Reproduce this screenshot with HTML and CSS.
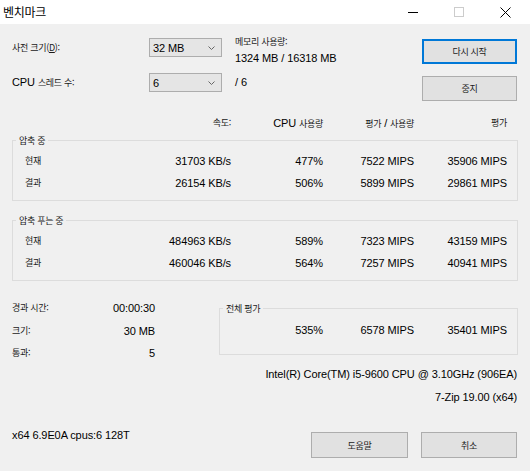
FILE: index.html
```html
<!DOCTYPE html>
<html lang="ko">
<head>
<meta charset="utf-8">
<title>벤치마크</title>
<link rel="stylesheet" href="styles.css">
</head>
<body>
<div class="titlebar">
  <span class="title">벤치마크</span>
  <div class="caption">
    <span class="cbtn"><svg width="10" height="10" viewBox="0 0 10 10"><path d="M0 5.5H10" stroke="#000" stroke-width="1"/></svg></span>
    <span class="cbtn"><svg width="10" height="10" viewBox="0 0 10 10"><rect x="0.5" y="0.5" width="9" height="9" fill="none" stroke="#cccccc" stroke-width="1"/></svg></span>
    <span class="cbtn"><svg width="11" height="11" viewBox="0 0 11 11"><path d="M0.5 0.5L10.5 10.5M10.5 0.5L0.5 10.5" stroke="#000" stroke-width="1"/></svg></span>
  </div>
</div>
<div class="content">
  <div class="top">
    <div class="lbl ko">사전 크기(<u>D</u>):</div>
    <div class="combo"><span>32 MB</span><svg width="7" height="4" viewBox="0 0 7 4"><path d="M0.5 0.5L3.5 3.5L6.5 0.5" fill="none" stroke="#666" stroke-width="1"/></svg></div>
    <div class="mem"><div class="ko">메모리 사용량:</div><div>1324 MB / 16318 MB</div></div>
    <button class="btn default btn-r1"><span class="ko">다시 시작</span></button>
    <div class="lbl">CPU <span class="ko">스레드 수:</span></div>
    <div class="combo"><span>6</span><svg width="7" height="4" viewBox="0 0 7 4"><path d="M0.5 0.5L3.5 3.5L6.5 0.5" fill="none" stroke="#666" stroke-width="1"/></svg></div>
    <div class="threads">/ 6</div>
    <button class="btn btn-r2"><span class="ko">중지</span></button>
  </div>

  <div class="cols header">
    <span></span>
    <span class="r ko">속도:</span>
    <span class="r">CPU <span class="ko">사용량</span></span>
    <span class="r"><span class="ko">평가</span> / <span class="ko">사용량</span></span>
    <span class="r ko">평가</span>
  </div>

  <div class="group">
    <span class="legend ko">압축 중</span>
    <div class="cols inner">
      <span class="ko">현재</span><span class="r">31703 KB/s</span><span class="r">477%</span><span class="r">7522 MIPS</span><span class="r">35906 MIPS</span>
      <span class="ko">결과</span><span class="r">26154 KB/s</span><span class="r">506%</span><span class="r">5899 MIPS</span><span class="r">29861 MIPS</span>
    </div>
  </div>

  <div class="group g2">
    <span class="legend ko">압축 푸는 중</span>
    <div class="cols inner">
      <span class="ko">현재</span><span class="r">484963 KB/s</span><span class="r">589%</span><span class="r">7323 MIPS</span><span class="r">43159 MIPS</span>
      <span class="ko">결과</span><span class="r">460046 KB/s</span><span class="r">564%</span><span class="r">7257 MIPS</span><span class="r">40941 MIPS</span>
    </div>
  </div>

  <div class="bottom">
    <div class="stats">
      <span class="ko">경과 시간:</span><span class="r">00:00:30</span>
      <span class="ko">크기:</span><span class="r">30 MB</span>
      <span class="ko">통과:</span><span class="r">5</span>
    </div>
    <div class="right">
      <div class="group g3">
        <span class="legend ko">전체 평가</span>
        <div class="total">
          <span class="r">535%</span><span class="r">6578 MIPS</span><span class="r">35401 MIPS</span>
        </div>
      </div>
      <div class="cpu">Intel(R) Core(TM) i5-9600 CPU @ 3.10GHz (906EA)</div>
      <div class="ver">7-Zip 19.00 (x64)</div>
    </div>
  </div>

  <div class="footer">
    <div class="sys">x64 6.9E0A cpus:6 128T</div>
    <div class="fbtns">
      <button class="btn help"><span class="ko">도움말</span></button>
      <button class="btn cancel"><span class="ko">취소</span></button>
    </div>
  </div>
</div>
</body>
</html>
```

FILE: styles.css
```css
* { box-sizing: border-box; }
html, body { margin: 0; padding: 0; }
body {
  width: 530px;
  height: 471px;
  overflow: hidden;
  background: #f0f0f0;
  color: #000;
  font-family: "Liberation Sans", Arial, "Noto Sans CJK KR", sans-serif;
  font-size: 11px;
  letter-spacing: -0.1px;
}
.ko {
  font-family: "Noto Sans CJK KR", sans-serif;
  font-size: 9px;
  letter-spacing: -0.3px;
  color: #1a1a1a;
}
.r { text-align: right; }

.titlebar {
  height: 24px;
  background: #fff;
  display: flex;
  align-items: center;
  justify-content: space-between;
}
.title {
  font-family: "Noto Sans CJK KR", sans-serif;
  font-size: 12px;
  letter-spacing: -0.3px;
  line-height: 24px;
  padding-left: 3px;
}
.caption { display: flex; height: 24px; padding-right: 2px; }
.cbtn { width: 46px; display: flex; align-items: center; justify-content: center; }
.cbtn svg { display: block; }

.content { padding: 14px 12px 0 12px; }

.top {
  display: grid;
  grid-template-columns: 137px 73px 1fr 96px;
  grid-template-rows: 35px auto;
  align-items: start;
}
.lbl { line-height: 19px; }
.combo {
  height: 19px;
  border: 1px solid #adadad;
  background: #e5e5e5;
  display: flex;
  align-items: center;
  justify-content: space-between;
  padding: 0 6px 0 3px;
}
.combo svg { display: block; }
.mem { padding-left: 13px; margin-top: -4px; line-height: 16px; }
.threads { padding-left: 13px; line-height: 19px; }

.btn {
  height: 25px;
  border: 1px solid #adadad;
  background: #e1e1e1;
  padding: 0;
  margin: 0;
  font: inherit;
  color: #000;
  display: flex;
  align-items: center;
  justify-content: center;
}
.btn.default { border: 2px solid #0078d7; }
.btn-r1 { margin-top: 1px; margin-right: 1px; }
.btn-r2 { margin-top: 3px; margin-right: 1px; }

.cols {
  display: grid;
  grid-template-columns: 100px 106px 92px 91px 93px;
  line-height: 22px;
}
.header { margin-top: 11px; padding: 0 10px 0 13px; }

.group {
  position: relative;
  border: 1px solid #dcdcdc;
  margin-top: 5px;
}
.group.g2 { margin-top: 19px; }
.legend {
  position: absolute;
  top: -7px;
  left: 3px;
  padding: 0 3px;
  line-height: 14px;
  background: #f0f0f0;
}
.inner { padding: 9px 10px 6px 12px; }

.bottom {
  display: flex;
  justify-content: space-between;
  align-items: flex-start;
  margin-top: 16px;
}
.stats {
  display: grid;
  grid-template-columns: 70px 73px;
  line-height: 22.5px;
}
.right { width: 299px; }
.group.g3 { margin-top: 11px; }
.total {
  display: grid;
  grid-template-columns: 92px 91px 93px;
  line-height: 22px;
  padding: 10px 10px 13px 11px;
}
.cpu { margin-top: 8px; line-height: 22px; text-align: right; margin-right: 1px; }
.ver { margin-top: 1px; line-height: 22px; text-align: right; margin-right: 1px; }

.footer {
  display: flex;
  justify-content: space-between;
  align-items: flex-start;
  margin-top: 16px;
}
.sys { line-height: 22px; }
.fbtns { display: flex; gap: 13px; margin-top: 8px; margin-right: 1px; }
.fbtns .btn { height: 26px; }
.help { width: 97px; }
.cancel { width: 96px; }
```
